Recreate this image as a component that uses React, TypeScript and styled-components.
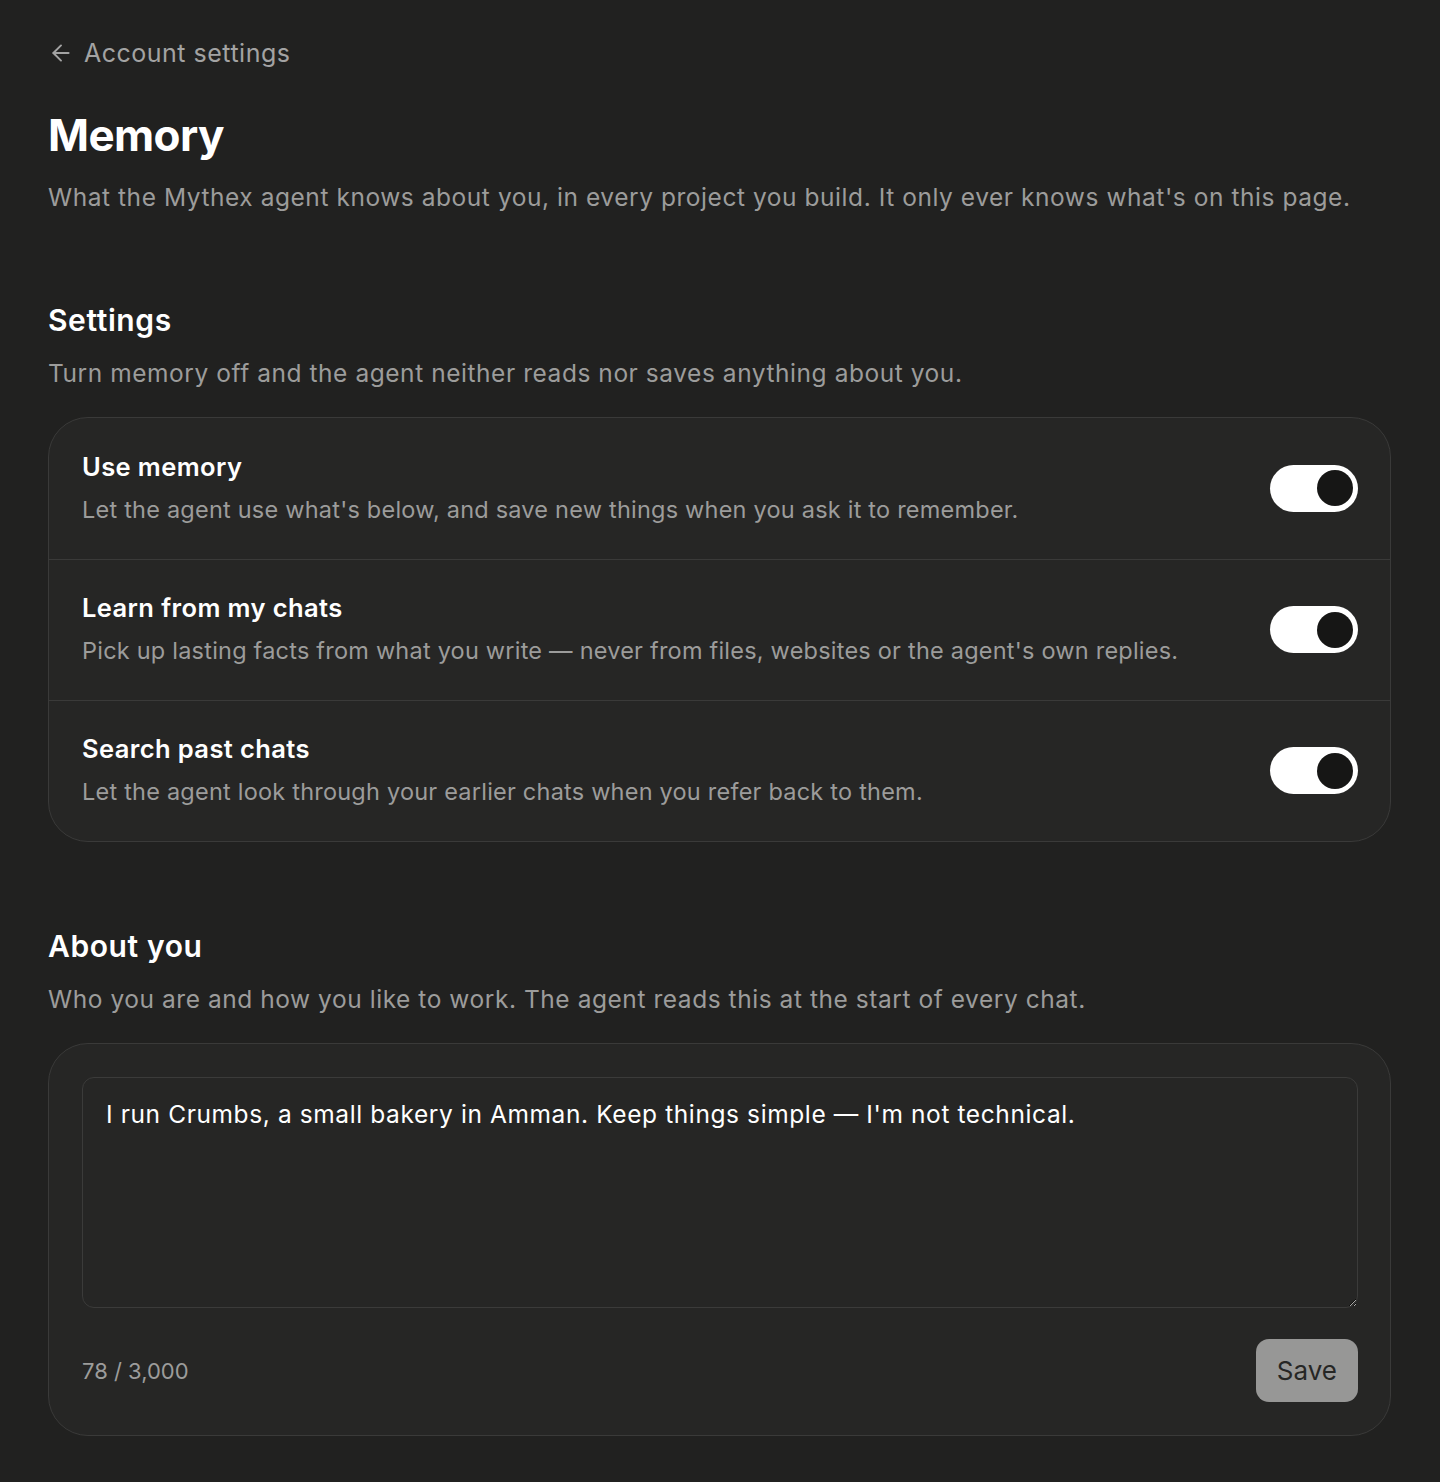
import { useState } from 'react';
import styled, { createGlobalStyle } from 'styled-components';

const GlobalStyle = createGlobalStyle`
  html, body {
    margin: 0;
    padding: 0;
    background: #212120;
  }
  body {
    font-family: Inter, 'Noto Sans', sans-serif;
    color: #ffffff;
    -webkit-font-smoothing: antialiased;
  }
  * {
    box-sizing: border-box;
  }
`;

const MAX_CHARS = 3000;

const initialSettings = [
  {
    key: 'useMemory',
    title: 'Use memory',
    description: "Let the agent use what's below, and save new things when you ask it to remember.",
  },
  {
    key: 'learnFromChats',
    title: 'Learn from my chats',
    description:
      "Pick up lasting facts from what you write — never from files, websites or the agent's own replies.",
  },
  {
    key: 'searchPastChats',
    title: 'Search past chats',
    description: 'Let the agent look through your earlier chats when you refer back to them.',
  },
];

const ArrowLeft = () => (
  <svg width="26" height="26" viewBox="0 0 24 24" fill="none" stroke="currentColor" strokeWidth="1.8" strokeLinecap="round" strokeLinejoin="round">
    <path d="M19 12H5" />
    <path d="M12 19l-7-7 7-7" />
  </svg>
);

export default function App() {
  const [toggles, setToggles] = useState<Record<string, boolean>>({
    useMemory: true,
    learnFromChats: true,
    searchPastChats: true,
  });
  const [about, setAbout] = useState(
    "I run Crumbs, a small bakery in Amman. Keep things simple — I'm not technical."
  );

  const flip = (key: string) => setToggles(prev => ({ ...prev, [key]: !prev[key] }));

  return (
    <>
      <GlobalStyle />
      <Page>
        <BackLink href="#">
          <ArrowLeft />
          Account settings
        </BackLink>

        <Header>
          <Title>Memory</Title>
          <Lead>
            What the Mythex agent knows about you, in every project you build. It only ever knows
            what's on this page.
          </Lead>
        </Header>

        <Section $gap={87}>
          <SectionHead>
            <SectionTitle>Settings</SectionTitle>
            <Lead>Turn memory off and the agent neither reads nor saves anything about you.</Lead>
          </SectionHead>
          <Card>
            {initialSettings.map(item => (
              <SettingRow key={item.key}>
                <SettingText>
                  <SettingTitle>{item.title}</SettingTitle>
                  <SettingDescription>{item.description}</SettingDescription>
                </SettingText>
                <Toggle
                  type="button"
                  role="switch"
                  aria-checked={toggles[item.key]}
                  $on={toggles[item.key]}
                  onClick={() => flip(item.key)}
                >
                  <Knob $on={toggles[item.key]} />
                </Toggle>
              </SettingRow>
            ))}
          </Card>
        </Section>

        <Section $gap={85}>
          <SectionHead>
            <SectionTitle>About you</SectionTitle>
            <Lead>Who you are and how you like to work. The agent reads this at the start of every chat.</Lead>
          </SectionHead>
          <EditorCard>
            <TextArea
              value={about}
              maxLength={MAX_CHARS}
              onChange={e => setAbout(e.target.value)}
            />
            <EditorFooter>
              <Counter>
                {about.length} / {MAX_CHARS.toLocaleString('en-US')}
              </Counter>
              <SaveButton type="button">Save</SaveButton>
            </EditorFooter>
          </EditorCard>
        </Section>
      </Page>
    </>
  );
}

const Page = styled.main`
  display: flex;
  flex-direction: column;
  padding: 36px 49px 46px 48px;
`;

const BackLink = styled.a`
  display: inline-flex;
  align-items: center;
  gap: 10px;
  align-self: flex-start;
  color: #a3a3a3;
  font-size: 25px;
  line-height: 34px;
  letter-spacing: 0.5px;
  text-decoration: none;
`;

const Header = styled.header`
  display: flex;
  flex-direction: column;
  gap: 17px;
  margin-top: 37px;
`;

const Title = styled.h1`
  margin: 0;
  font-size: 44px;
  font-weight: 700;
  line-height: 56px;
  letter-spacing: -0.6px;
  color: #ffffff;
`;

const Lead = styled.p`
  margin: 0;
  font-size: 24.5px;
  line-height: 34px;
  letter-spacing: 0.55px;
  color: #9c9c9b;
`;

const Section = styled.section<{ $gap: number }>`
  display: flex;
  flex-direction: column;
  gap: 27px;
  margin-top: ${p => p.$gap}px;
`;

const SectionHead = styled.div`
  display: flex;
  flex-direction: column;
  gap: 17px;
`;

const SectionTitle = styled.h2`
  margin: 0;
  font-size: 30px;
  font-weight: 600;
  line-height: 38px;
  letter-spacing: 0.6px;
  color: #ffffff;
`;

const Card = styled.div`
  display: flex;
  flex-direction: column;
  background: #262625;
  border: 1.5px solid #3a3a39;
  border-radius: 40px;
  overflow: hidden;
`;

const SettingRow = styled.div`
  display: flex;
  align-items: center;
  justify-content: space-between;
  gap: 24px;
  height: 141px;
  padding: 0 32px 2px 33px;

  & + & {
    border-top: 1.5px solid #3a3a39;
  }
`;

const SettingText = styled.div`
  display: flex;
  flex-direction: column;
  gap: 10px;
`;

const SettingTitle = styled.div`
  font-size: 25.5px;
  font-weight: 600;
  line-height: 34px;
  letter-spacing: 0.4px;
  color: #ffffff;
`;

const SettingDescription = styled.div`
  font-size: 23.5px;
  line-height: 32px;
  letter-spacing: 0.22px;
  color: #9c9c9b;
`;

const Toggle = styled.button<{ $on: boolean }>`
  flex-shrink: 0;
  display: flex;
  align-items: center;
  justify-content: ${p => (p.$on ? 'flex-end' : 'flex-start')};
  width: 88px;
  height: 47px;
  margin-top: 1px;
  padding: 0 5px;
  border: none;
  border-radius: 24px;
  background: ${p => (p.$on ? '#ffffff' : '#4a4a49')};
  cursor: pointer;
`;

const Knob = styled.span<{ $on: boolean }>`
  width: 36px;
  height: 36px;
  border-radius: 50%;
  background: ${p => (p.$on ? '#161615' : '#ffffff')};
`;

const EditorCard = styled.div`
  display: flex;
  flex-direction: column;
  gap: 31px;
  padding: 33px 32px 33px 33px;
  background: #262625;
  border: 1.5px solid #3a3a39;
  border-radius: 40px;
`;

const TextArea = styled.textarea`
  display: block;
  width: 100%;
  height: 231px;
  padding: 19px 23px;
  background: #262625;
  border: 1.5px solid #3b3b3a;
  border-radius: 12px;
  color: #ffffff;
  font-family: Inter, 'Noto Sans', sans-serif;
  font-size: 24.5px;
  line-height: 34px;
  letter-spacing: 0.6px;
  resize: vertical;
  outline: none;
`;

const EditorFooter = styled.div`
  display: flex;
  align-items: center;
  justify-content: space-between;
`;

const Counter = styled.span`
  font-size: 22px;
  line-height: 30px;
  color: #9c9c9b;
`;

const SaveButton = styled.button`
  height: 63px;
  padding: 0 21px;
  border: none;
  border-radius: 13px;
  background: #979796;
  color: #262625;
  font-family: Inter, 'Noto Sans', sans-serif;
  font-size: 26px;
  cursor: default;
`;
